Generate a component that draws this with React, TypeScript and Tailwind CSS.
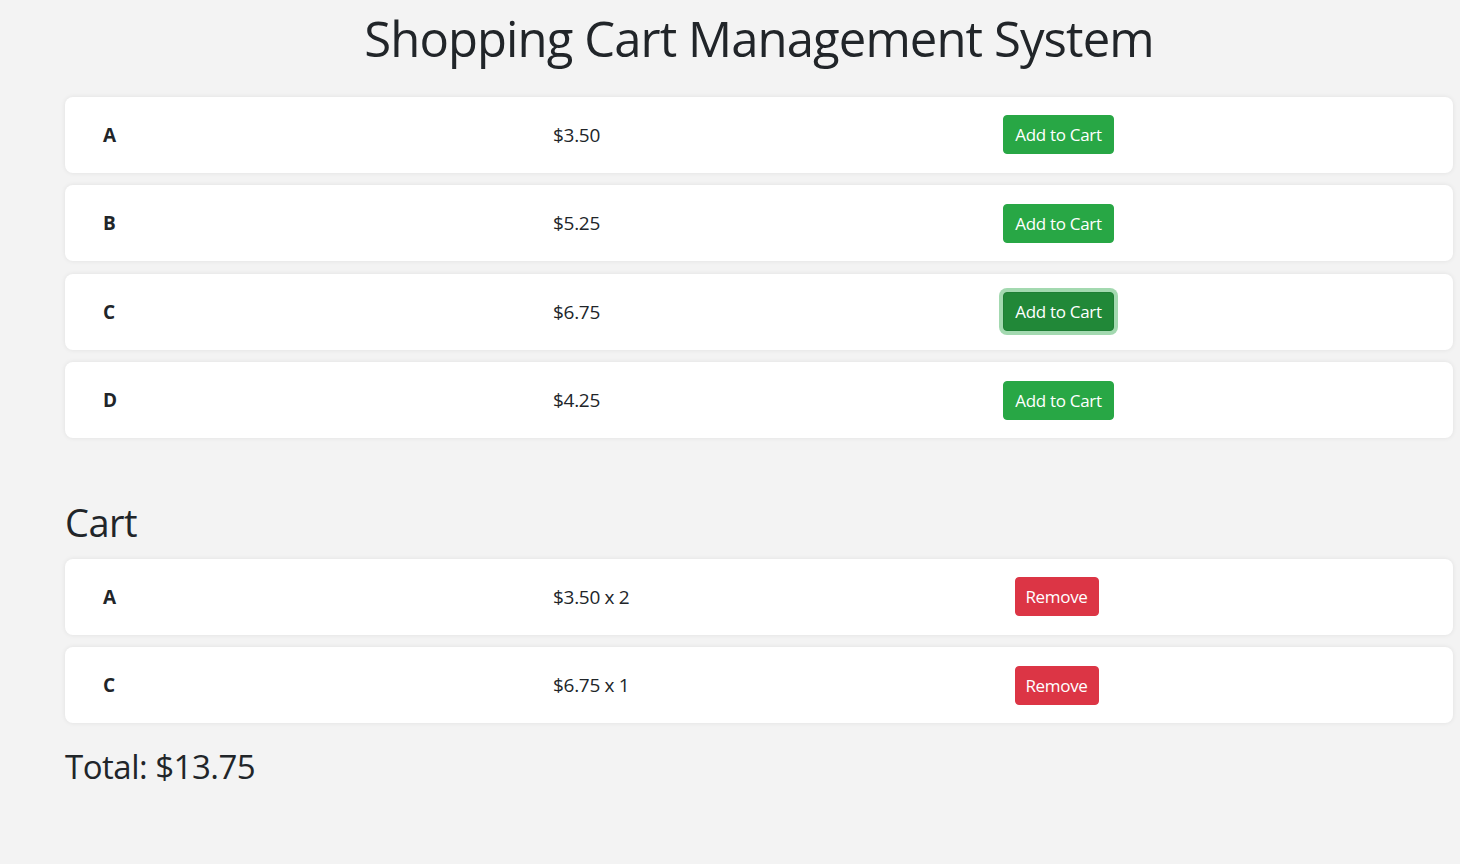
import React from "react";

const products = [
  { name: "A", price: "$3.50" },
  { name: "B", price: "$5.25" },
  { name: "C", price: "$6.75", focused: true },
  { name: "D", price: "$4.25" },
];

const cart = [
  { name: "A", price: "$3.50 x 2" },
  { name: "C", price: "$6.75 x 1" },
];

function Row({ name, price, children }: { name: string; price: string; children: React.ReactNode }) {
  return (
    <div className="flex h-[76px] items-center rounded-[8px] bg-white pl-[38px] shadow-[0_0_5px_rgba(0,0,0,0.08)]">
      <div className="w-[450px] text-[19px] font-bold">{name}</div>
      <div className="w-[450px] text-[19px] tracking-[-0.3px]">{price}</div>
      <div className="flex w-[111px] justify-center">{children}</div>
    </div>
  );
}

export default function App() {
  return (
    <div className="min-h-screen bg-[#f3f3f3] font-['Open_Sans',sans-serif] text-[#212529]">
      <div className="pl-[65px] pr-[7px]">
        <h1 className="pt-[9px] pb-[29px] text-center text-[49px] leading-[1.2] font-normal tracking-[-0.9px]">
          Shopping Cart Management System
        </h1>
        <div className="flex flex-col gap-[12.5px]">
          {products.map((p) => (
            <Row key={p.name} name={p.name} price={p.price}>
              <button
                className={
                  p.focused
                    ? "h-[39px] w-[111px] whitespace-nowrap rounded-[4px] border border-[#1e7e34] bg-[#218838] text-[17px] leading-[1.5] tracking-[-0.3px] text-white shadow-[0_0_0_4px_rgba(72,180,97,0.5)]"
                    : "h-[39px] w-[111px] whitespace-nowrap rounded-[4px] border border-[#28a745] bg-[#28a745] text-[17px] leading-[1.5] tracking-[-0.3px] text-white"
                }
              >
                Add to Cart
              </button>
            </Row>
          ))}
        </div>
        <h2 className="mt-[62px] mb-[13px] text-[38px] leading-[1.2] font-normal tracking-[-0.5px]">Cart</h2>
        <div className="flex flex-col gap-[12.5px]">
          {cart.map((c) => (
            <Row key={c.name} name={c.name} price={c.price}>
              <button className="mr-[4px] h-[39px] w-[84px] whitespace-nowrap rounded-[4px] border border-[#dc3545] bg-[#dc3545] text-[17px] leading-[1.5] tracking-[-0.3px] text-white">
                Remove
              </button>
            </Row>
          ))}
        </div>
        <div className="mt-[24px] text-[33px] leading-[1.2] tracking-[-0.5px]">Total: $13.75</div>
      </div>
    </div>
  );
}
